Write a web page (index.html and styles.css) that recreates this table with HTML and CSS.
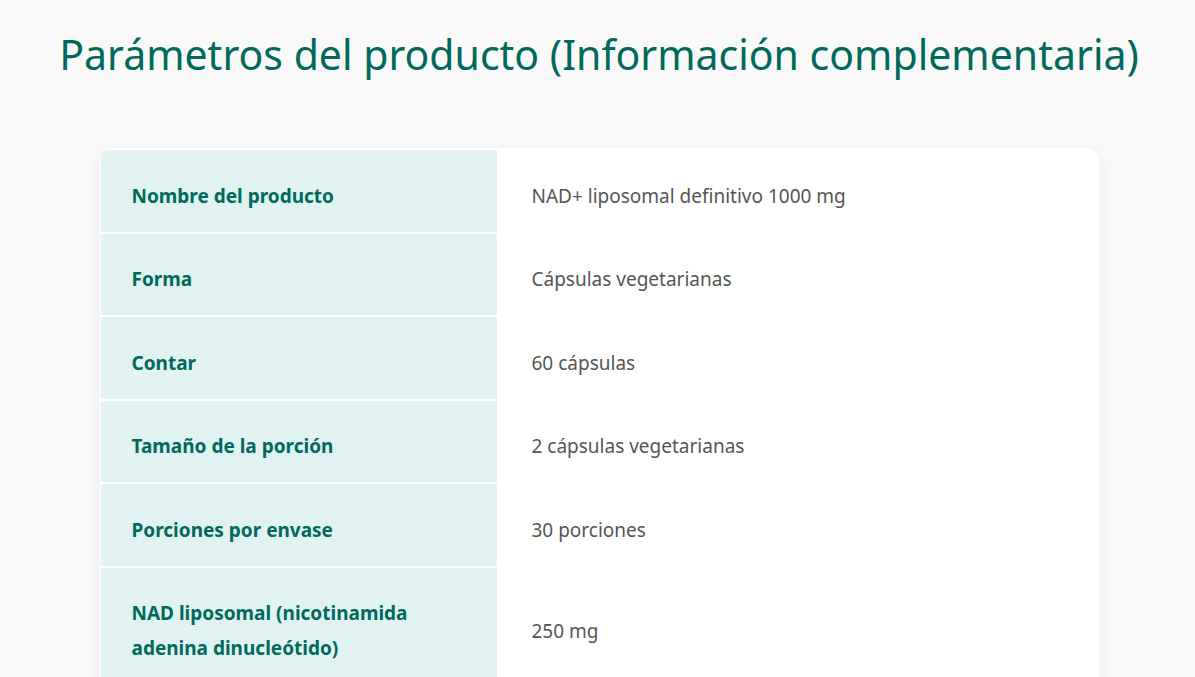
FILE: index.html
```html
<!DOCTYPE html>
<html lang="es">
<head>
<meta charset="utf-8">
<title>Parámetros del producto</title>
<link rel="stylesheet" href="styles.css">
</head>
<body>
<main class="page">
  <h1 class="title">Parámetros del producto (Información complementaria)</h1>
  <div class="card">
    <table class="params">
      <tbody>
        <tr><th>Nombre del producto</th><td>NAD+ liposomal definitivo 1000 mg</td></tr>
        <tr><th>Forma</th><td>Cápsulas vegetarianas</td></tr>
        <tr><th>Contar</th><td>60 cápsulas</td></tr>
        <tr><th>Tamaño de la porción</th><td>2 cápsulas vegetarianas</td></tr>
        <tr><th>Porciones por envase</th><td>30 porciones</td></tr>
        <tr><th>NAD liposomal (nicotinamida adenina dinucleótido)</th><td>250 mg</td></tr>
        <tr><th>Ácido alfa lipoico</th><td>100 mg</td></tr>
      </tbody>
    </table>
  </div>
</main>
</body>
</html>
```
FILE: styles.css
```css
html, body {
  margin: 0;
  padding: 0;
  background: #f9f9f9;
}
body {
  font-family: "Noto Sans", "Open Sans", sans-serif;
}
.page {
  padding: 24px 0 0 3px;
}
.title {
  margin: 0;
  text-align: center;
  font-weight: 400;
  font-size: 41px;
  line-height: 60px;
  color: #00695c;
  letter-spacing: 0;
}
.card {
  margin: 64px auto 0;
  width: 999px;
  background: #fff;
  border-radius: 12px;
  box-shadow: 0 4px 20px rgba(0, 0, 0, 0.06);
  overflow: hidden;
  padding: 2px 1px 1px;
  box-sizing: border-box;
}
.params {
  width: 100%;
  border-collapse: collapse;
}
.params th,
.params td {
  padding: 28.5px 30px 18.1px 31px;
  font-size: 19px;
  line-height: 35px;
  text-align: left;
  vertical-align: middle;
  border-bottom: 2px solid #fff;
}
.params th {
  width: 335px;
  background: #e0f2f1;
  color: #00695c;
  font-weight: 700;
}
.params td {
  padding-left: 35px;
  color: #555;
  font-weight: 400;
}
```
